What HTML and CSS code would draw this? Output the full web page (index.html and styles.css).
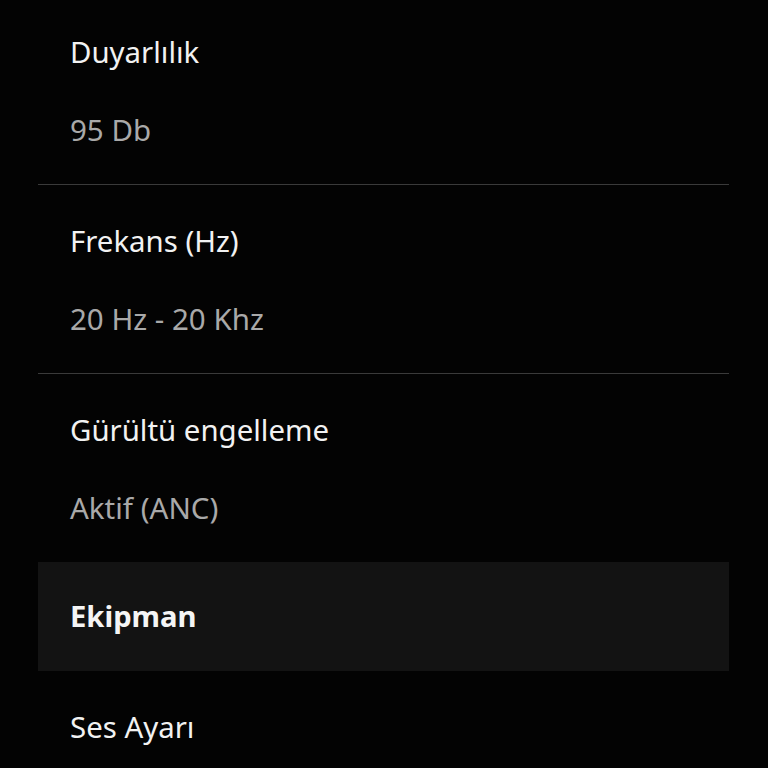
FILE: index.html
```html
<!DOCTYPE html>
<html>
<head>
	<meta charset="utf-8">
	<title>Özellikler</title>
	<link rel="stylesheet" href="styles.css">
</head>
<body>
<div class="specs">
	<div class="spec first">
		<div class="spec-label">Duyarlılık</div>
		<div class="spec-value">95 Db</div>
	</div>
	<div class="spec">
		<div class="spec-label">Frekans (Hz)</div>
		<div class="spec-value">20 Hz - 20 Khz</div>
	</div>
	<div class="spec last">
		<div class="spec-label">Gürültü engelleme</div>
		<div class="spec-value">Aktif (ANC)</div>
	</div>
	<div class="group">Ekipman</div>
	<div class="spec">
		<div class="spec-label">Ses Ayarı</div>
	</div>
</div>
</body>
</html>
```

FILE: styles.css
```css
*{
	margin: 0;
	padding: 0;
}
body{
	background: #030303;
	font-family: "Noto Sans", "Open Sans", sans-serif;
	overflow: hidden;
}
.specs{
	margin: 0 39px 0 38px;
}
.spec{
	padding: 36px 32px 34px;
	border-bottom: 1px solid #3a3a3a;
}
.spec.first{
	padding-top: 32px;
}
.spec.last{
	border-bottom: none;
}
.spec-label{
	font-size: 29.4px;
	line-height: 40px;
	color: #f2f2f2;
}
.spec-value{
	margin-top: 38px;
	font-size: 29.5px;
	line-height: 40px;
	color: #a9a9a9;
}
.group{
	height: 109px;
	line-height: 109px;
	padding: 0 32px;
	background: #131313;
	font-size: 29.2px;
	font-weight: bold;
	color: #f5f5f5;
}
```
